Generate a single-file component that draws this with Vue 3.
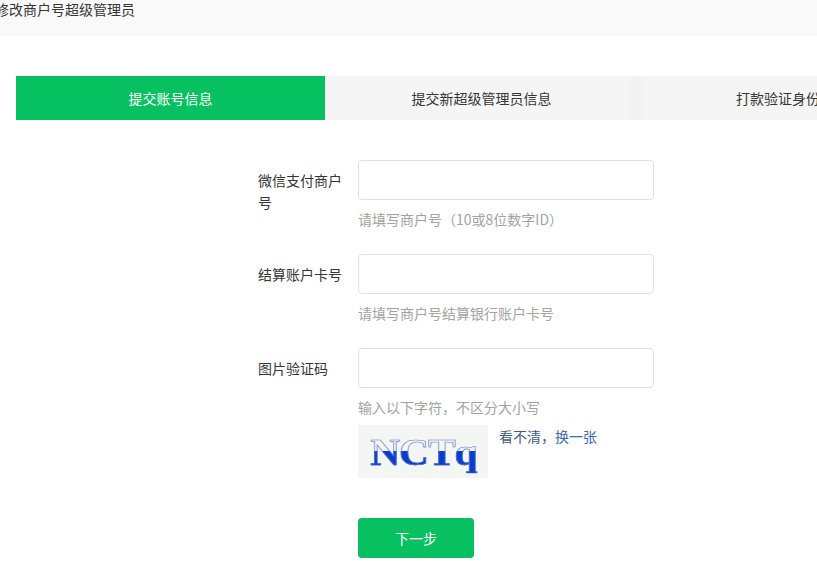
<script setup>
const fields = [
  { label: '微信支付商户号', hint: '请填写商户号（10或8位数字ID）' },
  { label: '结算账户卡号', hint: '请填写商户号结算银行账户卡号' },
  { label: '图片验证码', hint: '输入以下字符，不区分大小写', captcha: true }
]
const steps = ['提交账号信息', '提交新超级管理员信息', '打款验证身份']
</script>

<template>
  <div class="page">
    <header class="head"><span class="title">修改商户号超级管理员</span></header>
    <ol class="steps">
      <li v-for="(s, i) in steps" :key="s" class="step" :class="'step' + i">
        <span>{{ s }}</span>
      </li>
    </ol>
    <form class="form" @submit.prevent>
      <div v-for="f in fields" :key="f.label" class="row">
        <label class="label">{{ f.label }}</label>
        <div class="control">
          <input class="input" type="text" />
          <p class="hint">{{ f.hint }}</p>
          <div v-if="f.captcha" class="captcha">
            <div class="code"><span class="code-text">NCTq</span></div>
            <span class="refresh"><span class="dark">看不清，</span>换一张</span>
          </div>
        </div>
      </div>
      <button class="next" type="submit">下一步</button>
    </form>
  </div>
</template>

<style>
html, body { margin: 0; background: #fff; overflow: hidden; }
</style>

<style scoped>
.page {
  width: 817px;
  height: 561px;
  overflow: hidden;
  font-family: "Noto Sans CJK SC", "Liberation Sans", sans-serif;
  font-size: 14px;
  color: #353535;
}
.head {
  height: 36px;
  background: #f9f9f9;
  line-height: 19px;
  white-space: nowrap;
}
.title { display: block; margin-left: -5px; }
.steps {
  list-style: none;
  margin: 40px 0 0 16px;
  padding: 0;
  display: flex;
  height: 44px;
  width: 900px;
}
.step {
  position: relative;
  line-height: 44px;
  text-align: center;
  background: #f5f5f5;
  white-space: nowrap;
}
.step0 { width: 309px; background: #07c160; color: #fff; }
.step0::after {
  content: "";
  position: absolute;
  left: 100%;
  top: 0;
  width: 11px;
  height: 44px;
  background: #07c160;
  clip-path: polygon(0 0, 100% 50%, 0 100%);
}
.step1 { width: 313px; padding-left: 0; }
.step2 { width: 278px; margin-left: 0; text-align: left; padding-left: 98px; box-sizing: border-box; }
.step1::after {
  content: "";
  position: absolute;
  right: -6px;
  top: 0;
  width: 14px;
  height: 44px;
  background: #f3f3f3;
  z-index: 1;
}
.form { margin: 40px 0 0 258px; }
.row { display: flex; margin-bottom: 14px; }
.label {
  width: 84px;
  margin-right: 16px;
  flex: none;
  padding-top: 9px;
  line-height: 22px;
}
.control { width: 296px; }
.input {
  display: block;
  box-sizing: border-box;
  width: 296px;
  height: 40px;
  border: 1px solid #e2e2e2;
  border-radius: 4px;
  background: #fff;
  outline: none;
}
.hint {
  margin: 8px 0 0;
  line-height: 22px;
  color: #a3a3a3;
  height: 32px;
}
.captcha { display: flex; margin-top: -3px; height: 53px; }
.code {
  width: 130px;
  height: 53px;
  background: #f4f6f4;
  display: flex;
  justify-content: center;
  align-items: center;
  overflow: hidden;
}
.code-text {
  display: block;
  font-family: "Liberation Serif", serif;
  font-weight: 700;
  font-size: 37px;
  line-height: 40px;
  letter-spacing: -1px;
  transform: scaleX(1.12) translateY(1px);
  color: transparent;
  background: linear-gradient(#f4f6f4 0 46%, #0a3ccf 46% 100%);
  -webkit-background-clip: text;
  background-clip: text;
  -webkit-text-stroke: 0.6px #5f78c4;
}
.refresh { margin-left: 11px; line-height: 22px; color: #3e68ad; }
.dark { color: #3e5a80; }
.next {
  display: block;
  margin: 40px 0 0 100px;
  width: 116px;
  height: 40px;
  border: 0;
  border-radius: 4px;
  background: #07c160;
  color: #fff;
  font: inherit;
  padding: 0;
}
</style>
